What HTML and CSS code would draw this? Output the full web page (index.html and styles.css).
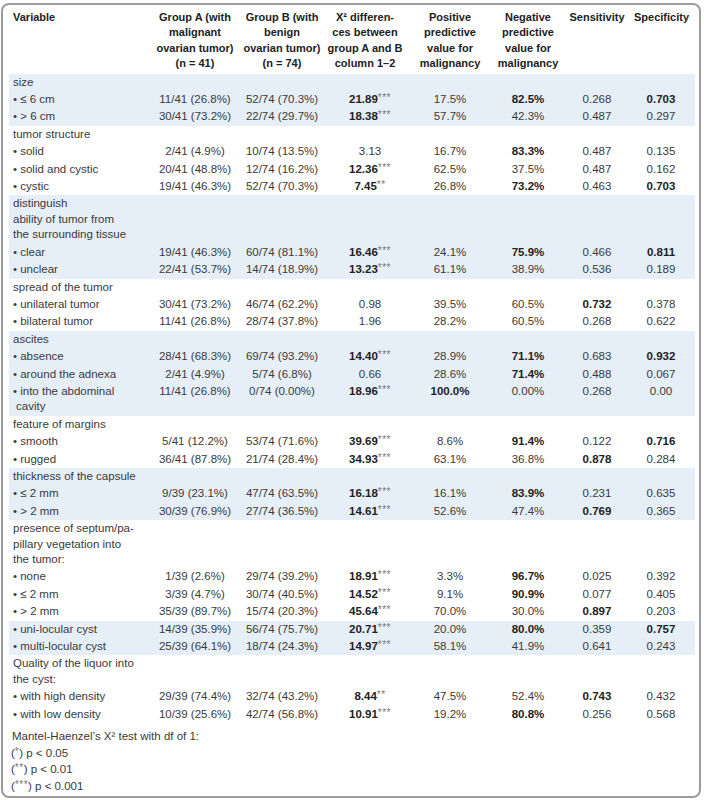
FILE: index.html
```html
<!DOCTYPE html>
<html lang="en">
<head>
    <meta charset="UTF-8">
    <title>Ovarian tumor ultrasound features</title>
    <link rel="stylesheet" href="styles.css">
</head>
<body>
  <div class="frame">
    <table class="stats">
      <colgroup>
        <col class="c-var"><col class="c-a"><col class="c-b"><col class="c-x">
        <col class="c-pos"><col class="c-neg"><col class="c-sens"><col class="c-spec">
      </colgroup>
      <thead>
        <tr>
          <th class="var">Variable</th>
          <th>Group A (with<br>malignant<br>ovarian tumor)<br>(n = 41)</th>
          <th>Group B (with<br>benign<br>ovarian tumor)<br>(n = 74)</th>
          <th>X² differen-<br>ces between<br>group A and B<br>column 1–2</th>
          <th>Positive<br>predictive<br>value for<br>malignancy</th>
          <th>Negative<br>predictive<br>value for<br>malignancy</th>
          <th>Sensitivity</th>
          <th class="spec">Specificity</th>
        </tr>
      </thead>
      <tbody class="band">
        <tr><td class="var" colspan="8">size</td></tr>
        <tr><td class="var">• ≤ 6 cm</td><td>11/41 (26.8%)</td><td>52/74 (70.3%)</td><td><b>21.89</b><sup>***</sup></td><td>17.5%</td><td><b>82.5%</b></td><td>0.268</td><td class="spec"><b>0.703</b></td></tr>
        <tr><td class="var">• &gt; 6 cm</td><td>30/41 (73.2%)</td><td>22/74 (29.7%)</td><td><b>18.38</b><sup>***</sup></td><td>57.7%</td><td>42.3%</td><td>0.487</td><td class="spec">0.297</td></tr>
      </tbody>
      <tbody>
        <tr><td class="var" colspan="8">tumor structure</td></tr>
        <tr><td class="var">• solid</td><td>2/41 (4.9%)</td><td>10/74 (13.5%)</td><td>3.13</td><td>16.7%</td><td><b>83.3%</b></td><td>0.487</td><td class="spec">0.135</td></tr>
        <tr><td class="var">• solid and cystic</td><td>20/41 (48.8%)</td><td>12/74 (16.2%)</td><td><b>12.36</b><sup>***</sup></td><td>62.5%</td><td>37.5%</td><td>0.487</td><td class="spec">0.162</td></tr>
        <tr><td class="var">• cystic</td><td>19/41 (46.3%)</td><td>52/74 (70.3%)</td><td><b>7.45</b><sup>**</sup></td><td>26.8%</td><td><b>73.2%</b></td><td>0.463</td><td class="spec"><b>0.703</b></td></tr>
      </tbody>
      <tbody class="band">
        <tr><td class="var" colspan="8">distinguish<br>ability of tumor from<br>the surrounding tissue</td></tr>
        <tr><td class="var">• clear</td><td>19/41 (46.3%)</td><td>60/74 (81.1%)</td><td><b>16.46</b><sup>***</sup></td><td>24.1%</td><td><b>75.9%</b></td><td>0.466</td><td class="spec"><b>0.811</b></td></tr>
        <tr><td class="var">• unclear</td><td>22/41 (53.7%)</td><td>14/74 (18.9%)</td><td><b>13.23</b><sup>***</sup></td><td>61.1%</td><td>38.9%</td><td>0.536</td><td class="spec">0.189</td></tr>
      </tbody>
      <tbody>
        <tr><td class="var" colspan="8">spread of the tumor</td></tr>
        <tr><td class="var">• unilateral tumor</td><td>30/41 (73.2%)</td><td>46/74 (62.2%)</td><td>0.98</td><td>39.5%</td><td>60.5%</td><td><b>0.732</b></td><td class="spec">0.378</td></tr>
        <tr><td class="var">• bilateral tumor</td><td>11/41 (26.8%)</td><td>28/74 (37.8%)</td><td>1.96</td><td>28.2%</td><td>60.5%</td><td>0.268</td><td class="spec">0.622</td></tr>
      </tbody>
      <tbody class="band">
        <tr><td class="var" colspan="8">ascites</td></tr>
        <tr><td class="var">• absence</td><td>28/41 (68.3%)</td><td>69/74 (93.2%)</td><td><b>14.40</b><sup>***</sup></td><td>28.9%</td><td><b>71.1%</b></td><td>0.683</td><td class="spec"><b>0.932</b></td></tr>
        <tr><td class="var">• around the adnexa</td><td>2/41 (4.9%)</td><td>5/74 (6.8%)</td><td>0.66</td><td>28.6%</td><td><b>71.4%</b></td><td>0.488</td><td class="spec">0.067</td></tr>
        <tr><td class="var">• into the abdominal<br><span class="cont">cavity</span></td><td>11/41 (26.8%)</td><td>0/74 (0.00%)</td><td><b>18.96</b><sup>***</sup></td><td><b>100.0%</b></td><td>0.00%</td><td>0.268</td><td class="spec">0.00</td></tr>
      </tbody>
      <tbody>
        <tr><td class="var" colspan="8">feature of margins</td></tr>
        <tr><td class="var">• smooth</td><td>5/41 (12.2%)</td><td>53/74 (71.6%)</td><td><b>39.69</b><sup>***</sup></td><td>8.6%</td><td><b>91.4%</b></td><td>0.122</td><td class="spec"><b>0.716</b></td></tr>
        <tr><td class="var">• rugged</td><td>36/41 (87.8%)</td><td>21/74 (28.4%)</td><td><b>34.93</b><sup>***</sup></td><td>63.1%</td><td>36.8%</td><td><b>0.878</b></td><td class="spec">0.284</td></tr>
      </tbody>
      <tbody class="band">
        <tr><td class="var" colspan="8">thickness of the capsule</td></tr>
        <tr><td class="var">• ≤ 2 mm</td><td>9/39 (23.1%)</td><td>47/74 (63.5%)</td><td><b>16.18</b><sup>***</sup></td><td>16.1%</td><td><b>83.9%</b></td><td>0.231</td><td class="spec">0.635</td></tr>
        <tr><td class="var">• &gt; 2 mm</td><td>30/39 (76.9%)</td><td>27/74 (36.5%)</td><td><b>14.61</b><sup>***</sup></td><td>52.6%</td><td>47.4%</td><td><b>0.769</b></td><td class="spec">0.365</td></tr>
      </tbody>
      <tbody>
        <tr><td class="var" colspan="8">presence of septum/pa-<br>pillary vegetation into<br>the tumor:</td></tr>
        <tr><td class="var">• none</td><td>1/39 (2.6%)</td><td>29/74 (39.2%)</td><td><b>18.91</b><sup>***</sup></td><td>3.3%</td><td><b>96.7%</b></td><td>0.025</td><td class="spec">0.392</td></tr>
        <tr><td class="var">• ≤ 2 mm</td><td>3/39 (4.7%)</td><td>30/74 (40.5%)</td><td><b>14.52</b><sup>***</sup></td><td>9.1%</td><td><b>90.9%</b></td><td>0.077</td><td class="spec">0.405</td></tr>
        <tr><td class="var">• &gt; 2 mm</td><td>35/39 (89.7%)</td><td>15/74 (20.3%)</td><td><b>45.64</b><sup>***</sup></td><td>70.0%</td><td>30.0%</td><td><b>0.897</b></td><td class="spec">0.203</td></tr>
      </tbody>
      <tbody class="band">
        <tr><td class="var">• uni-locular cyst</td><td>14/39 (35.9%)</td><td>56/74 (75.7%)</td><td><b>20.71</b><sup>***</sup></td><td>20.0%</td><td><b>80.0%</b></td><td>0.359</td><td class="spec"><b>0.757</b></td></tr>
        <tr><td class="var">• multi-locular cyst</td><td>25/39 (64.1%)</td><td>18/74 (24.3%)</td><td><b>14.97</b><sup>***</sup></td><td>58.1%</td><td>41.9%</td><td>0.641</td><td class="spec">0.243</td></tr>
      </tbody>
      <tbody>
        <tr><td class="var" colspan="8">Quality of the liquor into<br>the cyst:</td></tr>
        <tr><td class="var">• with high density</td><td>29/39 (74.4%)</td><td>32/74 (43.2%)</td><td><b>8.44</b><sup>**</sup></td><td>47.5%</td><td>52.4%</td><td><b>0.743</b></td><td class="spec">0.432</td></tr>
        <tr><td class="var">• with low density</td><td>10/39 (25.6%)</td><td>42/74 (56.8%)</td><td><b>10.91</b><sup>***</sup></td><td>19.2%</td><td><b>80.8%</b></td><td>0.256</td><td class="spec">0.568</td></tr>
      </tbody>
    </table>

    <div class="notes">
      <p class="lead">Mantel-Haenzel’s X² test with df of 1:</p>
      <p>(<sup>*</sup>) p &lt; 0.05</p>
      <p>(<sup>**</sup>) p &lt; 0.01</p>
      <p>(<sup>***</sup>) p &lt; 0.001</p>
    </div>
  </div>
</body>
</html>
```

FILE: styles.css
```css
* {
    margin: 0;
    padding: 0;
    box-sizing: border-box;
}

body {
    font-family: "Liberation Sans", Arial, sans-serif;
    font-size: 11.5px;
    color: #3a3a3a;
    background-color: #fff;
}

.frame {
    width: 700px;
    margin: 3px 0 0 1px;
    padding: 3px 4px 2px 6px;
    border: 2px solid #9c9c9c;
    border-radius: 8px;
}

.stats {
    width: 686px;
    table-layout: fixed;
    border-collapse: collapse;
    border-spacing: 0;
}

.c-var { width: 143px; }
.c-a { width: 86px; }
.c-b { width: 88px; }
.c-x { width: 78px; }
.c-pos { width: 92px; }
.c-neg { width: 64px; }
.c-sens { width: 74px; }
.c-spec { width: 61px; }

.stats th {
    font-size: 11px;
    font-weight: bold;
    color: #222;
    line-height: 15.4px;
    padding: 2px 0;
    text-align: center;
    vertical-align: top;
    white-space: nowrap;
}

.stats td {
    line-height: 15.4px;
    padding: 1px 0;
    text-align: center;
    vertical-align: top;
    white-space: nowrap;
}

/* chi-square values sit a little right of the header centre */
.stats td:nth-child(4) {
    padding-left: 10px;
}

.stats .var {
    text-align: left;
    padding-left: 4px;
}

.stats .spec {
    padding-right: 7px;
}

.stats b {
    color: #222;
}

.band tr {
    background-color: #e6eef8;
}

.cont {
    padding-left: 3px;
}

sup {
    font-size: 10px;
    font-weight: normal;
    color: #777;
    letter-spacing: 0.5px;
    vertical-align: 2px;
    line-height: 0;
}

.notes {
    margin-top: 5px;
    padding-left: 3px;
}

.notes p {
    line-height: 16.5px;
}

.notes p:not(.lead) {
    margin-left: -1px;
}
```
